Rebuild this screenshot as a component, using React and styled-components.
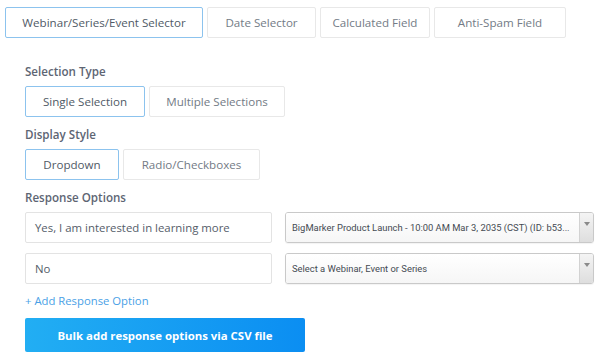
import styled, { createGlobalStyle } from 'styled-components'

const GlobalStyle = createGlobalStyle`
  body {
    margin: 0;
    background: #ffffff;
    font-family: "Open Sans", "Noto Sans", sans-serif;
  }
`

const Page = styled.div`
  width: 600px;
  height: 360px;
  overflow: hidden;
  padding: 7px 5px 0 5px;
  box-sizing: border-box;
`

const TabBar = styled.div`
  display: flex;
  gap: 4px;
`

const Tab = styled.div`
  width: ${(p) => p.w}px;
  height: 31px;
  box-sizing: border-box;
  border: 1px solid ${(p) => (p.active ? '#8cc3ee' : '#e8e8e8')};
  border-radius: 2px;
  display: flex;
  align-items: center;
  justify-content: center;
  font-size: 11.6px;
  color: ${(p) => (p.active ? '#505a66' : '#737b86')};
`

const Form = styled.div`
  padding: 26px 0 0 20px;
  display: flex;
  flex-direction: column;
`

const Label = styled.div`
  font-size: 11.6px;
  font-weight: 600;
  color: #5d6573;
  height: 15px;
  line-height: 15px;
  margin-bottom: 7px;
`

const ToggleRow = styled.div`
  display: flex;
  gap: 4px;
  margin-bottom: 10px;
`

const Toggle = styled.div`
  width: ${(p) => p.w}px;
  height: 31px;
  box-sizing: border-box;
  border: 1px solid ${(p) => (p.active ? '#8cc3ee' : '#e8e8e8')};
  border-radius: 2px;
  display: flex;
  align-items: center;
  justify-content: center;
  font-size: 11.6px;
  color: ${(p) => (p.active ? '#505a66' : '#737b86')};
`

const OptionRow = styled.div`
  display: flex;
  align-items: center;
  gap: 13px;
  margin-bottom: 10px;
`

const TextField = styled.div`
  width: 247px;
  height: 31px;
  box-sizing: border-box;
  border: 1px solid #e3e3e3;
  border-radius: 2px;
  display: flex;
  align-items: center;
  padding-left: 9px;
  font-size: 11.4px;
  color: #555d69;
`

const Select = styled.div`
  width: 309px;
  height: 31px;
  box-sizing: border-box;
  border: 1px solid #c9c9c9;
  border-radius: 3px;
  display: flex;
  align-items: stretch;
  overflow: hidden;
  box-shadow: 0 1px 1px rgba(0, 0, 0, 0.05);
`

const SelectText = styled.div`
  flex: 1;
  display: flex;
  align-items: center;
  padding-left: 6px;
  font-family: "Roboto", "Liberation Sans", sans-serif;
  font-size: 9.4px;
  color: #444a52;
  white-space: nowrap;
  overflow: hidden;
  background: linear-gradient(#ffffff, #f6f6f6);
`

const SelectArrow = styled.div`
  width: 14px;
  border-left: 1px solid #d2d2d2;
  background: linear-gradient(#f4f4f4, #dedede);
  display: flex;
  justify-content: center;
  padding-top: 9px;
  box-sizing: border-box;
`

const AddLink = styled.div`
  font-size: 11.3px;
  color: #4a9fe6;
  margin-top: -1px;
  height: 16px;
  line-height: 16px;
`

const BulkButton = styled.div`
  width: 280px;
  height: 34px;
  margin-top: 9px;
  border-radius: 2px;
  background: linear-gradient(90deg, #22aef3, #0b8ef2);
  color: #ffffff;
  font-size: 11.4px;
  font-weight: 700;
  display: flex;
  align-items: center;
  justify-content: center;
`

const Caret = () => (
  <svg width="6" height="4" viewBox="0 0 6 4">
    <path d="M0 0 L6 0 L3 4 Z" fill="#8a8a8a" />
  </svg>
)

export default function App() {
  return (
    <>
      <GlobalStyle />
      <Page>
        <TabBar>
          <Tab w={198} active>Webinar/Series/Event Selector</Tab>
          <Tab w={109}>Date Selector</Tab>
          <Tab w={110}>Calculated Field</Tab>
          <Tab w={132}>Anti-Spam Field</Tab>
        </TabBar>
        <Form>
          <Label>Selection Type</Label>
          <ToggleRow>
            <Toggle w={120} active>Single Selection</Toggle>
            <Toggle w={136}>Multiple Selections</Toggle>
          </ToggleRow>
          <Label>Display Style</Label>
          <ToggleRow>
            <Toggle w={94} active>Dropdown</Toggle>
            <Toggle w={137}>Radio/Checkboxes</Toggle>
          </ToggleRow>
          <Label>Response Options</Label>
          <OptionRow>
            <TextField>Yes, I am interested in learning more</TextField>
            <Select>
              <SelectText>BigMarker Product Launch - 10:00 AM Mar 3, 2035 (CST) (ID: b53...</SelectText>
              <SelectArrow><Caret /></SelectArrow>
            </Select>
          </OptionRow>
          <OptionRow>
            <TextField>No</TextField>
            <Select>
              <SelectText>Select a Webinar, Event or Series</SelectText>
              <SelectArrow><Caret /></SelectArrow>
            </Select>
          </OptionRow>
          <AddLink>+ Add Response Option</AddLink>
          <BulkButton>Bulk add response options via CSV file</BulkButton>
        </Form>
      </Page>
    </>
  )
}
